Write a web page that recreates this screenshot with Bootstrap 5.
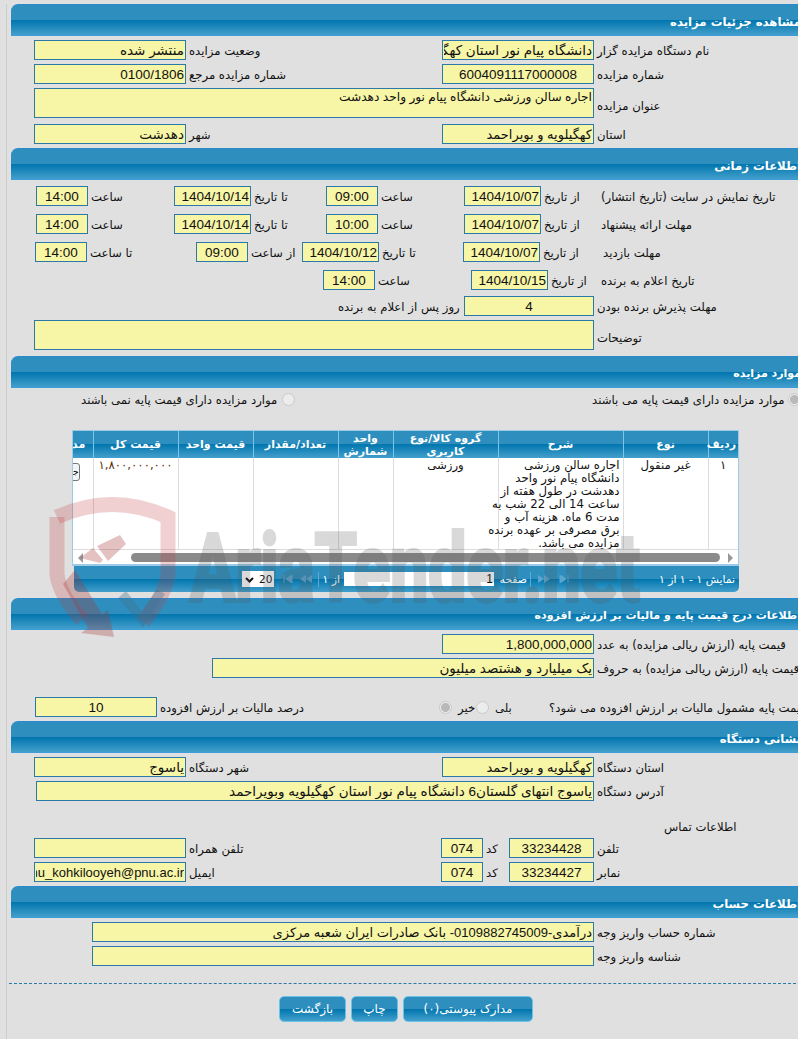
<!DOCTYPE html>
<html lang="fa">

<head>
  <meta charset="utf-8">
  <title>مشاهده جزئیات مزایده</title>
  <link href="https://cdn.jsdelivr.net/npm/bootstrap@5.3.2/dist/css/bootstrap.min.css" rel="stylesheet">
  <script src="https://cdn.jsdelivr.net/npm/bootstrap@5.3.2/dist/js/bootstrap.bundle.min.js"></script>
  <style>
    html, body { height: 100%; }
    body { background: #e0e0e0; color: #111; font: 11.7px/14px "DejaVu Sans", sans-serif; overflow: hidden; position: relative; }
    .page-wrap { margin-left: 6px; border-left: 1px solid #cdcdcd; padding-left: 4px; height: 1039px; }
    .sheet { width: 800px; }

    .sec-head { height: 32px; direction: rtl; padding: 9px 10px 0 0; color: #fff; font-weight: bold; font-size: 11px; line-height: 16px; border-top: 1px solid #2a8ad0; border-bottom: 1px solid #3b9ddc; border-top-left-radius: 7px; white-space: nowrap; background: linear-gradient(#2e8fbf 0, #2e8fbf 15px, #0075ae 15px, #439fcb 100%); }
    .sec-big { font-size: 11.7px; }

    .frow { height: 20px; }
    .frow > * { flex: none; }
    .tall { height: 30px; }
    .fld { height: 100%; border: 1px solid #2b79a8; background: #f7f5a6; color: #111; direction: rtl; padding: 0 1px; margin: 0; border-radius: 0; outline: 0; font: 13.5px/16px "Liberation Sans", "DejaVu Sans", sans-serif; resize: none; }
    .fld-sm { font-size: 13px; }
    textarea.fld { font-size: 12.2px; }
    .lb { direction: rtl; text-align: left; padding: 2px 0 0 3px; white-space: nowrap; }
    .lb-plain { padding-left: 0; }
    .lb-6 { padding-left: 6px; }
    .lb-down { padding-top: 6px; }

    .w13 { width: 13px; } .w42 { width: 42px; } .w50 { width: 50px; } .w52 { width: 52px; } .w54 { width: 54px; }
    .w57 { width: 57px; } .w60 { width: 60px; } .w75 { width: 75px; } .w77 { width: 77px; } .w84 { width: 84px; }
    .w85 { width: 85px; } .w86 { width: 86px; } .w96 { width: 96px; } .w109 { width: 109px; } .w122 { width: 122px; }
    .w126 { width: 126px; } .w130 { width: 130px; } .w152 { width: 152px; } .w196 { width: 196px; } .w201 { width: 201px; } .w24 { width: 24px; }
    .w26 { width: 26px; } .w282 { width: 282px; } .w297 { width: 297px; } .w255 { width: 255px; } .w256 { width: 256px; }
    .w382 { width: 382px; } .w502 { width: 502px; } .w558 { width: 558px; } .w560 { width: 560px; } .w11 { width: 11px; }

    .ml23 { margin-left: 23px; } .ml24 { margin-left: 24px; } .ml25 { margin-left: 25px; } .ml70 { margin-left: 70px; }
    .ml81 { margin-left: 81px; } .ml201 { margin-left: 201px; } .ml312 { margin-left: 312px; } .ml327 { margin-left: 327px; }
    .ml431 { margin-left: 431px; } .ml653 { margin-left: 653px; }

    .gap-a { margin-top: 4px; } .gap-b { margin-top: 6px; } .gap-c { margin-top: 8px; } .gap-d { margin-top: 19px; } .gap-f { margin-top: 17px; } .gap-r { margin-top: 3px; }
    .gap-h { margin-top: 4px; }

    .rdo { appearance: none; width: 13px; height: 13px; margin: 0; border: 1px solid #c9c9c9; border-radius: 50%; background: #ececec; display: block; }
    .rdo:checked { background: radial-gradient(circle, #b9b9b9 0 4px, #ececec 5px); }

    .grid-box { margin: 23px 0 0 61px; width: 667px; height: 136px; border: 1px solid #9ccbe8; border-bottom-width: 2px; background: #fff; overflow: hidden; direction: rtl; }
    .grid-clip { height: 118px; overflow: hidden; }
    .grid-tbl { width: 695px; table-layout: fixed; border-collapse: collapse; margin: 0; font-size: 11.7px; line-height: 13px; }
    .grid-tbl th { height: 27px; padding: 0 2px; font-size: 11px; background: linear-gradient(#2e8fbf 0, #2e8fbf 13px, #0075ae 13px, #439fcb 100%); color: #fff; font-weight: bold; text-align: center; border-left: 1px solid #7cc4ec; }
    .grid-tbl td { height: 91px; padding: 1px 5px 0; vertical-align: top; text-align: center; border-left: 1px solid #dcdcdc; background: #fff; }
    .grid-tbl td.txt-cell { text-align: right; padding: 1px 3px 0 0; white-space: nowrap; }
    .c30 { width: 30px; } .c85 { width: 85px; } .c125 { width: 125px; } .c105 { width: 105px; } .c55 { width: 55px; } .c75 { width: 75px; } .c50 { width: 50px; }
    .price { color: #5a2e06; }
    .att-btn { width: 23px; height: 18px; margin-top: 4px; padding: 0; border: 1px solid #777; border-radius: 3px; background: #f4f4f4; font: 9px/14px "DejaVu Sans", sans-serif; overflow: hidden; white-space: nowrap; }

    .sbar { height: 16px; background: #fff; border-top: 1px solid #dcdcdc; direction: ltr; }
    .sbar-thumb { width: 589px; height: 9px; margin: 3px 0 0 48px; background: #8a8a8a; border-radius: 5px; }
    .tri-l, .tri-r { width: 0; height: 0; margin-top: 3px; border-top: 5px solid transparent; border-bottom: 5px solid transparent; }
    .tri-l { margin-left: 5px; border-right: 5px solid #999; }
    .tri-r { margin-left: 8px; border-left: 5px solid #999; }

    .pager { margin-left: 63px; width: 665px; height: 26px; color: #fff; padding-top: 6px; font-size: 10.8px; border-bottom-left-radius: 5px; border-bottom-right-radius: 5px; background: linear-gradient(#2e8fbf 0, #2e8fbf 13px, #0075ae 13px, #439fcb 100%); }
    .pager > * { flex: none; }
    .pg-select { width: 32px; height: 16px; margin: -1px 0 0 168px; background: #fff; color: #111; font-size: 10.5px; line-height: 16px; direction: ltr; padding-left: 3px; white-space: nowrap; overflow: hidden; }
    .pg-chev { width: 9px; height: 6px; margin-right: 5px; display: inline-block; }
    .pg-ico { width: 12px; height: 8px; margin-top: 3px; }
    .pg-sep { width: 1px; height: 15px; background: #5ea9cf; }
    .pg-text { direction: rtl; white-space: nowrap; padding-top: 1px; }
    .pg-of { width: 19px; margin-left: 2px; }
    .pg-page { width: 28px; margin-left: 5px; }
    .pg-input { width: 150px; height: 14px; margin-left: 4px; background: #fff; color: #111; direction: rtl; font: 12px/14px "Liberation Sans", sans-serif; padding-right: 1px; }
    .i-a { margin-left: 8px; } .i-b { margin-left: 6px; } .i-c { margin-left: 3px; } .i-d { margin-left: 7px; }

    .dash-line { border-top: 1px dashed #2b79a8; margin: 17px 0 0 -2px; }
    .act-btn { height: 26px; padding: 0; border: 1px solid #6cc1e8; border-radius: 5px; color: #fff; font: 12px/22px "DejaVu Sans", sans-serif; direction: rtl; background: linear-gradient(#2e8fbf 0, #2e8fbf 12px, #0075ae 12px, #439fcb 100%); }
    .btn-row { margin: 12px 0 0 268px; gap: 5px; }
    .b67 { width: 67px; } .b47 { width: 47px; } .b130 { width: 130px; }

    .wm { position: absolute; left: 0; top: 0; pointer-events: none; }
  </style>
</head>

<body>
  <div class="page-wrap">
    <div class="sheet">

      <div class="sec-head sec-big gap-h">مشاهده جزئیات مزایده</div>
      <div class="d-flex align-items-center frow gap-a">
        <input class="fld w152 ml23" readonly value="منتشر شده">
        <div class="lb w256">وضعیت مزایده</div>
        <input class="fld w152" readonly value="دانشگاه پیام نور استان کهگیلویه و بویراحمد">
        <div class="lb">نام دستگاه مزایده گزار</div>
      </div>
      <div class="d-flex align-items-center frow gap-a">
        <input class="fld w152 ml23" readonly value="0100/1806">
        <div class="lb w256">شماره مزایده مرجع</div>
        <input class="fld w152 text-center" readonly value="6004091117000008">
        <div class="lb">شماره مزایده</div>
      </div>
      <div class="d-flex align-items-center frow tall gap-a">
        <textarea class="fld w560 ml23" readonly>اجاره سالن ورزشی دانشگاه پیام نور واحد دهدشت</textarea>
        <div class="lb lb-down">عنوان مزایده</div>
      </div>
      <div class="d-flex align-items-center frow gap-b">
        <input class="fld w152 ml23" readonly value="دهدشت">
        <div class="lb w256">شهر</div>
        <input class="fld fld-sm w152" readonly value="کهگیلویه و بویراحمد">
        <div class="lb">استان</div>
      </div>

      <div class="sec-head sec-big gap-h">اطلاعات زمانی</div>
      <div class="d-flex align-items-center frow gap-b">
        <input class="fld w52 ml25 text-center" readonly value="14:00">
        <div class="lb w86">ساعت</div>
        <input class="fld w77" readonly value="1404/10/14">
        <div class="lb w75">تا تاریخ</div>
        <input class="fld w52 text-center" readonly value="09:00">
        <div class="lb w86">ساعت</div>
        <input class="fld w77" readonly value="1404/10/07">
        <div class="lb w57">از تاریخ</div>
        <div class="lb">تاریخ نمایش در سایت (تاریخ انتشار)</div>
      </div>
      <div class="d-flex align-items-center frow gap-c">
        <input class="fld w52 ml25 text-center" readonly value="14:00">
        <div class="lb w86">ساعت</div>
        <input class="fld w77" readonly value="1404/10/14">
        <div class="lb w75">تا تاریخ</div>
        <input class="fld w52 text-center" readonly value="10:00">
        <div class="lb w86">ساعت</div>
        <input class="fld w77" readonly value="1404/10/07">
        <div class="lb w57">از تاریخ</div>
        <div class="lb">مهلت ارائه پیشنهاد</div>
      </div>
      <div class="d-flex align-items-center frow gap-c">
        <input class="fld w52 ml24 text-center" readonly value="14:00">
        <div class="lb w109">تا ساعت</div>
        <input class="fld w52 text-center" readonly value="09:00">
        <div class="lb w54">از ساعت</div>
        <input class="fld w77" readonly value="1404/10/12">
        <div class="lb w84">تا تاریخ</div>
        <input class="fld w77" readonly value="1404/10/07">
        <div class="lb w60">از تاریخ</div>
        <div class="lb">مهلت بازدید</div>
      </div>
      <div class="d-flex align-items-center frow gap-c">
        <input class="fld w52 ml312 text-center" readonly value="14:00">
        <div class="lb w96">ساعت</div>
        <input class="fld w77" readonly value="1404/10/15">
        <div class="lb w50">از تاریخ</div>
        <div class="lb">تاریخ اعلام به برنده</div>
      </div>
      <div class="d-flex align-items-center frow gap-b">
        <div class="lb lb-plain w126 ml327">روز پس از اعلام به برنده</div>
        <input class="fld w130 text-center" readonly value="4">
        <div class="lb">مهلت پذیرش برنده بودن</div>
      </div>
      <div class="d-flex align-items-center frow tall gap-a">
        <textarea class="fld w560 ml23" readonly></textarea>
        <div class="lb lb-down">توضیحات</div>
      </div>

      <div class="sec-head gap-b">موارد مزایده</div>
      <div class="d-flex align-items-center gap-r">
        <div class="lb lb-plain w201 ml70">موارد مزایده دارای قیمت پایه نمی باشند</div>
        <input class="rdo" type="radio" name="basePrice" disabled>
        <div class="lb lb-plain w297"></div>
        <div class="lb w196 lb-plain">موارد مزایده دارای قیمت پایه می باشند</div>
        <input class="rdo" type="radio" name="basePrice" checked disabled>
      </div>

      <div class="grid-box">
        <div class="grid-clip">
          <table class="grid-tbl">
            <thead>
              <tr>
                <th class="c30">ردیف</th>
                <th class="c85">نوع</th>
                <th class="c125">شرح</th>
                <th class="c105">گروه کالا/نوع کاربری</th>
                <th class="c55">واحد شمارش</th>
                <th class="c85">تعداد/مقدار</th>
                <th class="c75">قیمت واحد</th>
                <th class="c85">قیمت کل</th>
                <th class="c50">مدارک</th>
              </tr>
            </thead>
            <tbody>
              <tr>
                <td>۱</td>
                <td>غیر منقول</td>
                <td class="txt-cell">اجاره سالن ورزشی<br>دانشگاه پیام نور واحد<br>دهدشت در طول هفته از<br>ساعت 14 الی 22 شب به<br>مدت 6 ماه. هزینه آب و<br>برق مصرفی بر عهده برنده<br>مزایده می باشد.</td>
                <td>ورزشی</td>
                <td></td>
                <td></td>
                <td></td>
                <td class="price">۱,۸۰۰,۰۰۰,۰۰۰</td>
                <td><button class="att-btn" type="button">جزئیات</button></td>
              </tr>
            </tbody>
          </table>
        </div>
        <div class="sbar d-flex">
          <div class="tri-l"></div>
          <div class="sbar-thumb"></div>
          <div class="tri-r"></div>
        </div>
      </div>

      <div class="pager d-flex">
        <div class="pg-select">
          <svg class="pg-chev" viewBox="0 0 9 6"><path d="M1 1l3.500 3.500L8 1" fill="none" stroke="#111" stroke-width="2"/></svg>20
        </div>
        <svg class="pg-ico i-a" viewBox="0 0 12 8"><path d="M2 0v8M10 0v8L4 4z" fill="#5ba6ce" stroke="#5ba6ce"/></svg>
        <svg class="pg-ico i-b" viewBox="0 0 12 8"><path d="M6 0v8L0 4zM12 0v8L6 4z" fill="#5ba6ce"/></svg>
        <div class="pg-sep i-b"></div>
        <div class="pg-text pg-of">از ۱</div>
        <div class="pg-input">1</div>
        <div class="pg-text pg-page">صفحه</div>
        <div class="pg-sep i-c"></div>
        <svg class="pg-ico i-d" viewBox="0 0 12 8"><path d="M0 0v8l6-4zM6 0v8l6-4z" fill="#5ba6ce"/></svg>
        <svg class="pg-ico i-a" viewBox="0 0 12 8"><path d="M10 0v8M2 0v8l6-4z" fill="#5ba6ce" stroke="#5ba6ce"/></svg>
        <div class="pg-text ms-auto me-1">نمایش ۱ - ۱ از ۱</div>
      </div>

      <div class="sec-head gap-b">اطلاعات درج قیمت پایه و مالیات بر ارزش افزوده</div>
      <div class="d-flex align-items-center frow gap-a">
        <input class="fld w152 ml431" readonly value="1,800,000,000">
        <div class="lb">قیمت پایه (ارزش ریالی مزایده) به عدد</div>
      </div>
      <div class="d-flex align-items-center frow gap-a">
        <input class="fld w382 ml201" readonly value="یک میلیارد و هشتصد میلیون">
        <div class="lb">قیمت پایه (ارزش ریالی مزایده) به حروف</div>
      </div>
      <div class="d-flex align-items-center frow gap-d">
        <input class="fld w122 ml24 text-center" readonly value="10">
        <div class="lb w282">درصد مالیات بر ارزش افزوده</div>
        <input class="rdo" type="radio" name="vat" checked disabled>
        <div class="lb lb-6 w24">خیر</div>
        <input class="rdo" type="radio" name="vat" disabled>
        <div class="lb lb-6 w57">بلی</div>
        <div class="lb">قیمت پایه مشمول مالیات بر ارزش افزوده می شود؟</div>
      </div>

      <div class="sec-head sec-big gap-h">نشانی دستگاه</div>
      <div class="d-flex align-items-center frow gap-a">
        <input class="fld w152 ml23" readonly value="یاسوج">
        <div class="lb w256">شهر دستگاه</div>
        <input class="fld fld-sm w152" readonly value="کهگیلویه و بویراحمد">
        <div class="lb">استان دستگاه</div>
      </div>
      <div class="d-flex align-items-center frow gap-a">
        <input class="fld w558 ml25" readonly value="یاسوج انتهای گلستان6 دانشگاه پیام نور استان کهگیلویه وبویراحمد">
        <div class="lb">آدرس دستگاه</div>
      </div>
      <div class="lb lb-plain ml653 gap-f">اطلاعات تماس</div>
      <div class="d-flex align-items-center frow gap-a">
        <input class="fld w152 ml23" readonly value="">
        <div class="lb w255">تلفن همراه</div>
        <input class="fld w42 text-center" readonly value="074">
        <div class="lb w26">کد</div>
        <input class="fld w85 text-center" readonly value="33234428">
        <div class="lb">تلفن</div>
      </div>
      <div class="d-flex align-items-center frow gap-a">
        <input class="fld fld-sm w152 ml23" readonly value="pnu_kohkilooyeh@pnu.ac.ir">
        <div class="lb w255">ایمیل</div>
        <input class="fld w42 text-center" readonly value="074">
        <div class="lb w26">کد</div>
        <input class="fld w85 text-center" readonly value="33234427">
        <div class="lb">نمابر</div>
      </div>

      <div class="sec-head sec-big gap-h">اطلاعات حساب</div>
      <div class="d-flex align-items-center frow gap-a">
        <input class="fld fld-sm w502 ml81" readonly value="درآمدی-0109882745009- بانک صادرات ایران شعبه مرکزی">
        <div class="lb">شماره حساب واریز وجه</div>
      </div>
      <div class="d-flex align-items-center frow gap-a">
        <input class="fld w502 ml81" readonly value="">
        <div class="lb">شناسه واریز وجه</div>
      </div>

      <div class="dash-line"></div>
      <div class="d-flex btn-row">
        <button class="act-btn b67" type="button">بازگشت</button>
        <button class="act-btn b47" type="button">چاپ</button>
        <button class="act-btn b130" type="button">مدارک پیوستی(۰)</button>
      </div>
    </div>
  </div>

  <!-- watermark over the page -->
  <svg class="wm" width="798" height="1039" viewBox="0 0 798 1039">
    <g fill="none" stroke="#c23a3a" stroke-opacity=".24" stroke-width="15">
      <path d="M57 517Q112 492 168 517V575Q165 595 143 622"/>
      <path d="M57 517V575Q60 595 82 620"/>
    </g>
    <path d="M80 558l13-10 10 12-3 3zM97 546l23-11 6 9-18 17zM75 570l27 44 6-4 6 27-33-4 7-5-25-44z" fill="#a83434" fill-opacity=".3"/>
    <path d="M118 598l25 30 22-34-8-5-15 22-16-20z" fill="#3f6f8f" fill-opacity=".35"/>
    <text x="190" y="601" font-family="Roboto, sans-serif" font-weight="700" font-size="94" textLength="450" lengthAdjust="spacingAndGlyphs" fill="#555" stroke="#555" stroke-width="4" opacity=".22">AriaTender.net</text>
  </svg>
</body>

</html>
